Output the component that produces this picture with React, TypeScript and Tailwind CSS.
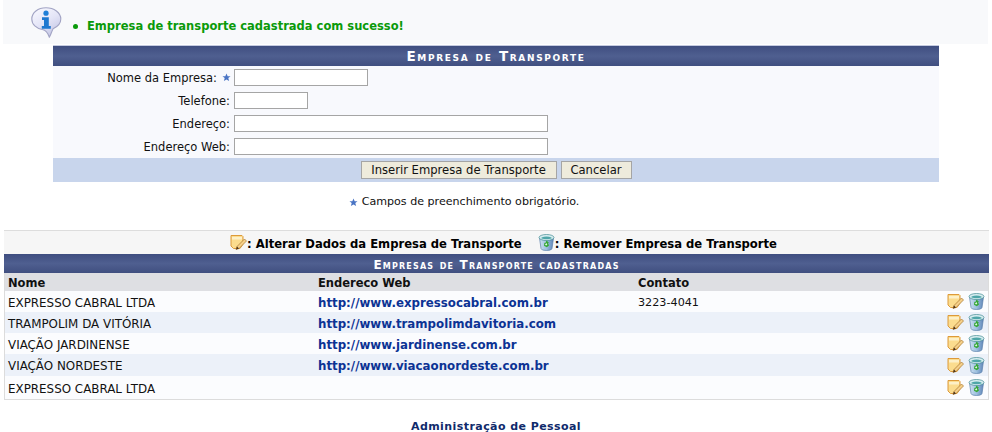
const captionBg = 'bg-[linear-gradient(#3f4e80_0%,#4f5f90_50%,#404f80_100%)]'

const EditIcon = () => (
  <svg width="17" height="17" viewBox="0 0 17 17" className="shrink-0">
    <path d="M1 1.500h11l1 1v7.500l-3 4.500H3.500L1 12z" fill="#fbdc8e" stroke="#dd9a3a" strokeWidth="1" />
    <path d="M2 3h10v2.500H2z" fill="#fdf0c8" />
    <path d="M6 15.500l1-3 7.500-7.500 2 2-7.500 7.500z" fill="#f5d08a" stroke="#a8762c" strokeWidth="0.7" />
    <path d="M6 15.500l1-3 2 2z" fill="#4a3218" />
  </svg>
)

const TrashIcon = () => (
  <svg width="17" height="17" viewBox="0 0 17 17" className="shrink-0">
    <defs>
      <linearGradient id="can" x1="0" x2="1" y1="0" y2="0">
        <stop offset="0" stopColor="#cfe2f2" />
        <stop offset="0.5" stopColor="#9dbfdf" />
        <stop offset="1" stopColor="#5f86b8" />
      </linearGradient>
    </defs>
    <path d="M1.500 4l1.500 10.500q.2 2 5.500 2t5.500-2L15.500 4z" fill="url(#can)" stroke="#5a80aa" strokeWidth="0.7" />
    <ellipse cx="8.500" cy="3.500" rx="7.500" ry="3" fill="#d7edf0" stroke="#3f8a90" strokeWidth="0.7" />
    <path d="M3.500 3.500q5-2 10 0v1q-5 1.500-10 0z" fill="#4fa6a8" />
    <path d="M8.500 6.500l2.500 2.200-1 .4 1 2.400-2.200 1.800-2.800-1.500.4-3 1 .2z" fill="#35a835" />
    <path d="M8.300 9l1 1.600-1.100 .9-1.200-.8z" fill="#e4f6e4" />
  </svg>
)

const Star = ({ className = '' }: { className?: string }) => (
  <svg width="9" height="9" viewBox="0 0 10 10" className={`shrink-0 ${className}`}>
    <path d="M5 .5l1.300 3h3.200L7 5.600l.9 3.400L5 7.200 2.100 9 3 5.600.5 3.500h3.200z" fill="#4a74c4" />
  </svg>
)

const InfoIcon = () => (
  <svg width="31" height="31" viewBox="0 0 31 31" className="shrink-0">
    <defs>
      <linearGradient id="bubble" x1="0" x2="0.6" y1="0" y2="1">
        <stop offset="0" stopColor="#fbfbff" />
        <stop offset="0.55" stopColor="#e4e5f7" />
        <stop offset="1" stopColor="#c6c8e6" />
      </linearGradient>
    </defs>
    <path d="M15 .8C7 .8.8 5.500.8 12c0 5.500 4.500 9.500 10.500 10.500 3 .5 5.500 3 7 7.700 1.500-2 2-5 3.800-8.500 4.500-2 7.700-5.500 7.700-9.700C29.800 5.500 23 .8 15 .8z" fill="url(#bubble)" stroke="#a2a4c4" strokeWidth="1.100" />
    <circle cx="15" cy="6.200" r="2.600" fill="#1f7fd8" />
    <path d="M11 10.300h6.800v8.700h2v2.700h-9V19h2.200v-6H11z" fill="#1f78d0" />
  </svg>
)

const fields = [
  { label: 'Nome da Empresa:', width: 'w-[134px]', required: true },
  { label: 'Telefone:', width: 'w-[74px]' },
  { label: 'Endereço:', width: 'w-[314px]' },
  { label: 'Endereço Web:', width: 'w-[314px]' },
]

const rows = [
  { nome: 'EXPRESSO CABRAL LTDA', web: 'http://www.expressocabral.com.br', contato: '3223-4041', h: 'h-[21px]' },
  { nome: 'TRAMPOLIM DA VITÓRIA', web: 'http://www.trampolimdavitoria.com', contato: '', h: 'h-[21px]' },
  { nome: 'VIAÇÃO JARDINENSE', web: 'http://www.jardinense.com.br', contato: '', h: 'h-[21px]' },
  { nome: 'VIAÇÃO NORDESTE', web: 'http://www.viacaonordeste.com.br', contato: '', h: 'h-[22px]' },
  { nome: 'EXPRESSO CABRAL LTDA', web: '', contato: '', h: 'h-[23px]' },
]

export default function App() {
  return (
    <div className="w-[992px] h-[432px] overflow-hidden bg-white text-[11px] text-[#111] font-['DejaVu_Sans',sans-serif]">
      <div className="ml-[3px] w-[985px] h-[44px] bg-[#f8f9fb] flex items-center pl-[28px]">
        <InfoIcon />
        <span className="ml-[11px] mt-[8px] mr-[9px] w-[5px] h-[5px] rounded-full bg-[#0a9a0a]" />
        <span className="mt-[10px] font-bold text-[#0a9a0a] text-[11.5px]">Empresa de transporte cadastrada com sucesso!</span>
      </div>

      <div className="ml-[53px] w-[886px] mt-[1px] bg-[#f8f9fd]">
        <div className={`${captionBg} h-[21px] border-t border-[#c5cbe0] flex items-center justify-center text-white font-bold text-[13.500px] tracking-[1.650px] [font-variant:small-caps]`}>
          Empresa de Transporte
        </div>
        <div className="h-[92px] flex flex-col gap-[6px] pt-[3px]">
          {fields.map((f) => (
            <div key={f.label} className="flex items-center h-[17px]">
              <div className="w-[177px] flex items-center justify-end text-[11.5px]">
                <span className="pt-[3px]">{f.label}</span>
                {f.required && <Star className="ml-[5px] mr-[-1px]" />}
              </div>
              <input className={`${f.width} ml-[4px] h-[17px] bg-white border border-[#a5a5a5]`} />
            </div>
          ))}
        </div>
        <div className="h-[24px] bg-[#c8d5ec] flex items-center justify-center gap-[4px]">
          <button className="h-[18px] w-[196px] bg-[#eeebdc] border border-[#a5a5a5] text-[11.600px] text-[#111]">Inserir Empresa de Transporte</button>
          <button className="h-[18px] w-[71px] bg-[#eeebdc] border border-[#a5a5a5] text-[11.600px] text-[#111]">Cancelar</button>
        </div>
      </div>

      <div className="mt-[13px] h-[14px] flex items-center justify-center gap-[4px] text-[11.100px] pr-[64px]">
        <Star />
        <span>Campos de preenchimento obrigatório.</span>
      </div>

      <div className="ml-[4px] w-[985px] mt-[21px] h-[24px] bg-[#f6f6f6] border-t border-[#ddd] flex items-center justify-center font-bold text-[11.600px] text-black pl-[14px]">
        <EditIcon />
        <span className="pt-[5px]">: Alterar Dados da Empresa de Transporte</span>
        <span className="ml-[16px]"><TrashIcon /></span>
        <span className="pt-[5px]">: Remover Empresa de Transporte</span>
      </div>

      <div className="ml-[4px] w-[985px] border-b border-x border-[#dcdcdc]">
        <div className={`${captionBg} h-[19px] pt-[2px] -mx-[1px] flex items-center justify-center text-white font-bold text-[12px] tracking-[1.200px] [font-variant:small-caps]`}>
          Empresas de Transporte cadastradas
        </div>
        <div className="h-[18px] bg-[#dedfe3] pt-[4px] flex items-center font-bold text-[11.500px] pl-[3px]">
          <div className="w-[310px]">Nome</div>
          <div className="w-[320px]">Endereco Web</div>
          <div>Contato</div>
        </div>
        {rows.map((r, i) => (
          <div key={i} className={`${r.h} ${i % 2 ? 'bg-[#ecf1f9]' : 'bg-[#fbfcfe]'} flex items-center pl-[3px]`}>
            <div className="w-[310px] pt-[4px] text-[11.900px]">{r.nome}</div>
            <div className="w-[320px] pt-[4px] font-bold text-[#0c3394] text-[11.800px]">{r.web}</div>
            <div className="flex-1 pt-[4px] text-[11.200px]">{r.contato}</div>
            <div className="flex items-center gap-[4px] pr-[3px]">
              <EditIcon />
              <TrashIcon />
            </div>
          </div>
        ))}
      </div>

      <div className="mt-[19px] text-center font-bold text-[#0f2a6b] text-[11px] tracking-[0.430px]">Administração de Pessoal</div>
    </div>
  )
}
